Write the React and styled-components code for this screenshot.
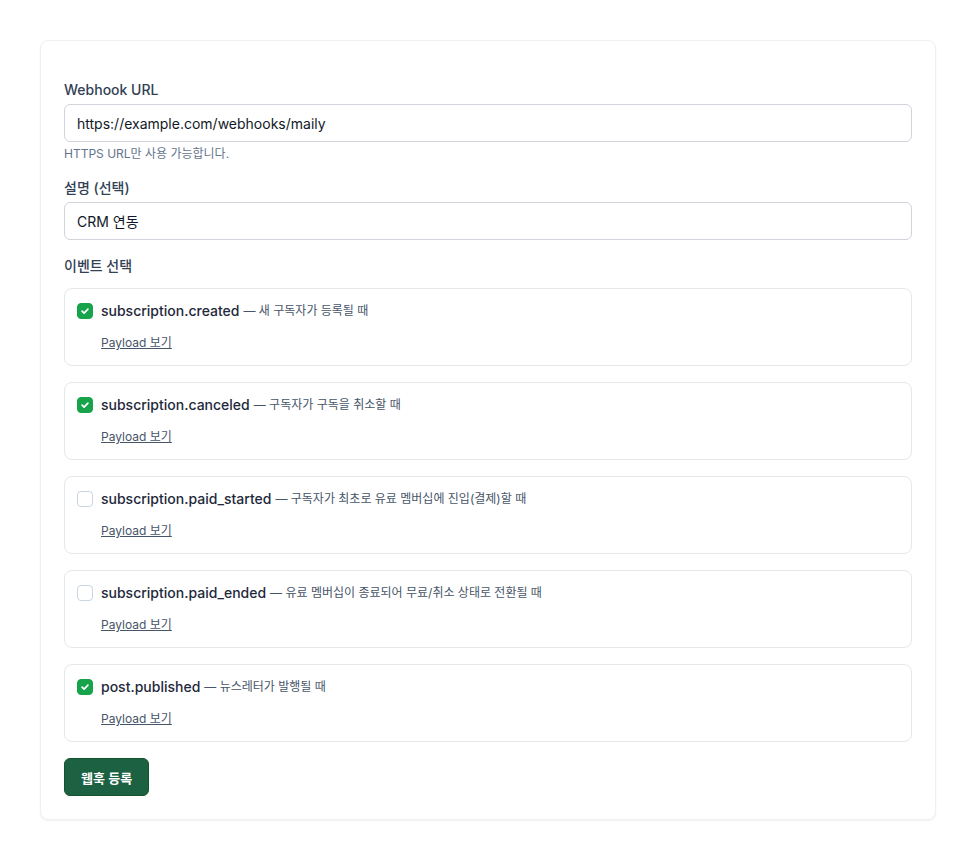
import React, { useState } from 'react'
import styled, { createGlobalStyle } from 'styled-components'

const GlobalStyle = createGlobalStyle`
  * { box-sizing: border-box; }
  body {
    margin: 0;
    background: #ffffff;
    font-family: "Inter", "Noto Sans CJK KR", "Noto Sans", sans-serif;
    color: #1e293b;
  }
`

const events = [
  { name: 'subscription.created', desc: '새 구독자가 등록될 때', checked: true },
  { name: 'subscription.canceled', desc: '구독자가 구독을 취소할 때', checked: true },
  { name: 'subscription.paid_started', desc: '구독자가 최초로 유료 멤버십에 진입(결제)할 때', checked: false },
  { name: 'subscription.paid_ended', desc: '유료 멤버십이 종료되어 무료/취소 상태로 전환될 때', checked: false },
  { name: 'post.published', desc: '뉴스레터가 발행될 때', checked: true },
]

const App = () => {
  const [selected, setSelected] = useState(events.map(e => e.checked))
  const toggle = i => setSelected(s => s.map((v, j) => (j === i ? !v : v)))

  return (
    <Page>
      <GlobalStyle />
      <Card>
        <Field>
          <Label>Webhook URL</Label>
          <Input defaultValue="https://example.com/webhooks/maily" />
          <Help>HTTPS URL만 사용 가능합니다.</Help>
        </Field>
        <Field>
          <Label>설명 (선택)</Label>
          <Input defaultValue="CRM 연동" />
        </Field>
        <Field>
          <Label $gap={12}>이벤트 선택</Label>
          <EventList>
            {events.map((e, i) => (
              <EventBox key={e.name}>
                <EventRow onClick={() => toggle(i)}>
                  <Check $on={selected[i]}>
                    {selected[i] && (
                      <svg width="10" height="10" viewBox="0 0 12 12" fill="none">
                        <path d="M2.5 6.2l2.4 2.4 4.6-4.9" stroke="#fff" strokeWidth="2" strokeLinecap="round" strokeLinejoin="round" />
                      </svg>
                    )}
                  </Check>
                  <EventName>{e.name}</EventName>
                  <EventDesc>— {e.desc}</EventDesc>
                </EventRow>
                <PayloadLink href="#">Payload 보기</PayloadLink>
              </EventBox>
            ))}
          </EventList>
        </Field>
        <SubmitButton>웹훅 등록</SubmitButton>
      </Card>
    </Page>
  )
}

export default App

const Page = styled.div`
  padding: 40px;
`
const Card = styled.div`
  background: #fff;
  border: 1px solid #f0f0f3;
  border-radius: 8px;
  box-shadow: 0 1px 2px rgba(15, 23, 42, 0.06);
  padding: 39px 23px 23px 23px;
  display: flex;
  flex-direction: column;
  gap: 16px;
`
const Field = styled.div`
  display: flex;
  flex-direction: column;
`
const Label = styled.div`
  font-size: 14px;
  line-height: 20px;
  font-weight: 500;
  color: #334155;
  margin-bottom: ${p => p.$gap || 4}px;
`
const Input = styled.input`
  height: 38px;
  padding: 0 12px;
  font-family: inherit;
  font-size: 14px;
  color: #111827;
  border: 1px solid #d1d5db;
  border-radius: 6px;
  outline: none;
  background: #fff;
`
const Help = styled.div`
  margin-top: 4px;
  font-size: 12px;
  line-height: 16px;
  color: #64748b;
`
const EventList = styled.div`
  display: flex;
  flex-direction: column;
  gap: 16px;
`
const EventBox = styled.div`
  border: 1px solid #e5e7eb;
  border-radius: 8px;
  padding: 12px;
  display: flex;
  flex-direction: column;
  gap: 12px;
`
const EventRow = styled.label`
  display: flex;
  align-items: center;
  line-height: 20px;
  cursor: pointer;
`
const Check = styled.span`
  width: 16px;
  height: 16px;
  border-radius: 4px;
  margin-right: 8px;
  display: inline-flex;
  align-items: center;
  justify-content: center;
  flex-shrink: 0;
  background: ${p => (p.$on ? '#16a34a' : '#fff')};
  border: 1px solid ${p => (p.$on ? '#16a34a' : '#cbd5e1')};
`
const EventName = styled.span`
  font-size: 14px;
  font-weight: 500;
  color: #1e293b;
`
const EventDesc = styled.span`
  margin-left: 4px;
  font-size: 12px;
  color: #475569;
`
const PayloadLink = styled.a`
  align-self: flex-start;
  margin-left: 24px;
  font-size: 12px;
  line-height: 20px;
  color: #475569;
  text-decoration: underline;
`
const SubmitButton = styled.button`
  align-self: flex-start;
  height: 38px;
  padding: 0 16px;
  font-family: inherit;
  font-size: 13px;
  font-weight: 600;
  color: #fff;
  background: #1c6142;
  border: 1px solid #14532d;
  border-radius: 6px;
  cursor: pointer;
`
